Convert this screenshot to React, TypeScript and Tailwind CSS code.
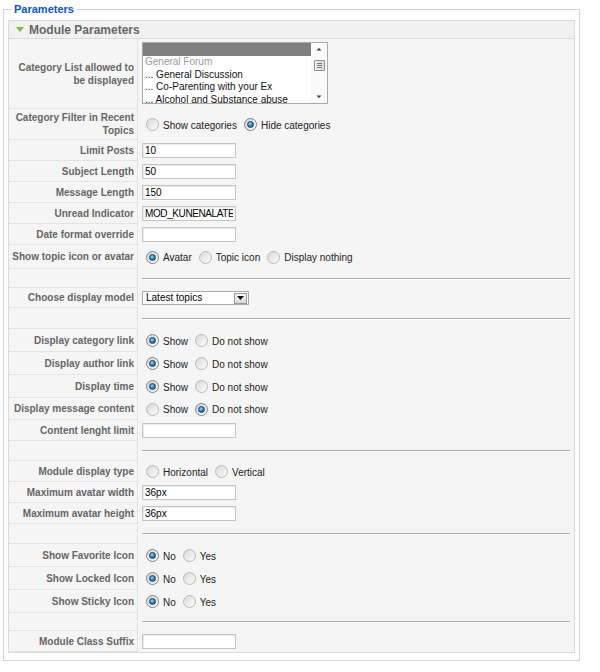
import React from "react";

const font = "font-['Liberation_Sans',Arial,Helvetica,sans-serif]";

function Radio({ checked }: { checked?: boolean }) {
  return (
    <span
      className={
        "inline-flex h-[13px] w-[13px] shrink-0 items-center justify-center rounded-full border " +
        (checked
          ? "border-[#808080] bg-[linear-gradient(135deg,#d4d4d4,#ffffff)]"
          : "border-[#b8b8b8] bg-[linear-gradient(135deg,#d9d9d9,#fdfdfd)]")
      }
    >
      {checked && (
        <span className="h-[7px] w-[7px] rounded-full border border-[#1f3c58] bg-[radial-gradient(circle_at_40%_35%,#a8dcf5_0%,#2f8cc2_45%,#104a74_100%)]" />
      )}
    </span>
  );
}

function RadioGroup({ options, value }: { options: string[]; value: number }) {
  return (
    <div className="flex items-center pl-[4px]">
      {options.map((o, i) => (
        <label key={o} className="mr-[7px] flex items-center">
          <Radio checked={i === value} />
          <span className="mt-[2px] ml-[4px] text-[10px] leading-[12px] text-[#222]">{o}</span>
        </label>
      ))}
    </div>
  );
}

function TextBox({ value = "", tight }: { value?: string; tight?: boolean }) {
  return (
    <input
      readOnly
      value={value}
      className={
        "h-[15px] w-[94px] border border-[#c4c4c4] bg-white px-[2px] text-[10px] leading-[12px] text-black shadow-[inset_1px_1px_0_#ececec] outline-none " +
        (tight ? "tracking-[-0.4px]" : "")
      }
    />
  );
}

function Rule() {
  return <div className="mr-[4px] h-0 w-full border-t border-b border-t-[#a9a9a9] border-b-[#ffffff]" />;
}

function Row({
  label,
  h,
  wrap,
  top,
  children,
}: {
  label?: string;
  h: string;
  wrap?: boolean;
  top?: boolean;
  children?: React.ReactNode;
}) {
  return (
    <div className={"flex " + h}>
      <div
        className={
          "flex w-[129px] shrink-0 items-center justify-end border-r border-b border-[#e4e4e4] pr-[3px] pl-[2px] text-right text-[10px] font-bold leading-[13px] text-[#666] " +
          (wrap ? "" : "whitespace-nowrap")
        }
      >
        {label}
      </div>
      <div className={"flex min-w-0 flex-1 pl-[4px] " + (top ? "items-start pt-[3px]" : "items-center")}>
        {children}
      </div>
    </div>
  );
}

function CategoryList() {
  return (
    <div className="flex h-[62px] w-[186px] border border-[#a9a9a9] bg-white">
      <div className="min-w-0 flex-1 overflow-hidden text-[10px] leading-[12.5px]">
        <div className="h-[13px] bg-[#808080]" />
        <div className="pl-[2px] text-[#9a9a9a]">General Forum</div>
        <div className="pl-[2px] text-[#111]">... General Discussion</div>
        <div className="pl-[2px] text-[#111]">... Co-Parenting with your Ex</div>
        <div className="pl-[2px] text-[#111]">... Alcohol and Substance abuse</div>
      </div>
      <div className="flex w-[16px] flex-col items-center bg-[#fafafa]">
        <svg width="16" height="13" viewBox="0 0 16 13">
          <path d="M5.5 7.5 L8 5 L10.5 7.5 Z" fill="#333" />
        </svg>
        <div className="mt-[4px] flex h-[11px] w-[11px] flex-col items-center justify-center gap-[1px] rounded-[1px] border border-[#8f8f8f] bg-[linear-gradient(90deg,#f2f2f2,#dcdcdc)]">
          <span className="h-px w-[5px] bg-[#777]" />
          <span className="h-px w-[5px] bg-[#777]" />
          <span className="h-px w-[5px] bg-[#777]" />
        </div>
        <div className="flex-1" />
        <svg width="16" height="13" viewBox="0 0 16 13">
          <path d="M5.5 5.5 L8 8 L10.5 5.5 Z" fill="#333" />
        </svg>
      </div>
    </div>
  );
}

function DisplayModel() {
  return (
    <div className="flex h-[14px] w-[107px] items-center border border-[#a9a9a9] bg-white">
      <span className="flex-1 pl-[3px] text-[10px] leading-[12px] text-black">Latest topics</span>
      <span className="mr-[1px] flex h-[11px] w-[13px] items-center justify-center border border-[#9a9a9a] bg-[linear-gradient(180deg,#f7f7f7,#d8d8d8)]">
        <svg width="7" height="4" viewBox="0 0 7 4">
          <path d="M0 0 H7 L3.5 4 Z" fill="#111" />
        </svg>
      </span>
    </div>
  );
}

export default function App() {
  const showHide = ["Show", "Do not show"];
  const noYes = ["No", "Yes"];
  return (
    <div className={"h-[672px] w-[600px] overflow-hidden bg-white " + font}>
      <fieldset className="mt-[3px] ml-[3px] w-[577px] border border-[#d4d4d4] px-[4px] pt-[4px] pb-[7px]">
        <legend className="ml-[3px] px-[3px] text-[11px] leading-[13px] font-bold text-[#0b55c4]">
          Parameters
        </legend>
        <div className="border border-[#dadada] bg-[#f5f5f5]">
          <div className="flex h-[18px] items-center border-b border-[#dadada] bg-[#f1f1f1] pl-[7px]">
            <svg width="8" height="5" viewBox="0 0 8 5" className="mr-[5px]">
              <path d="M0 0 H8 L4 5 Z" fill="#79c043" />
            </svg>
            <span className="mt-px text-[12px] leading-[14px] font-bold text-[#666]">Module Parameters</span>
          </div>

          <Row label="Category List allowed to be displayed" h="h-[70px]" wrap top>
            <CategoryList />
          </Row>
          <Row label="Category Filter in Recent Topics" h="h-[31px]" wrap>
            <RadioGroup options={["Show categories", "Hide categories"]} value={1} />
          </Row>
          <Row label="Limit Posts" h="h-[21px]">
            <TextBox value="10" />
          </Row>
          <Row label="Subject Length" h="h-[21px]">
            <TextBox value="50" />
          </Row>
          <Row label="Message Length" h="h-[21px]">
            <TextBox value="150" />
          </Row>
          <Row label="Unread Indicator" h="h-[21px]">
            <TextBox value="MOD_KUNENALATESTNEW" tight />
          </Row>
          <Row label="Date format override" h="h-[21px]">
            <TextBox />
          </Row>
          <Row label="Show topic icon or avatar" h="h-[24px]">
            <RadioGroup options={["Avatar", "Topic icon", "Display nothing"]} value={0} />
          </Row>
          <Row h="h-[19px]">
            <Rule />
          </Row>
          <Row label="Choose display model" h="h-[20px]">
            <DisplayModel />
          </Row>
          <Row h="h-[21px]">
            <Rule />
          </Row>
          <Row label="Display category link" h="h-[23px]">
            <RadioGroup options={showHide} value={0} />
          </Row>
          <Row label="Display author link" h="h-[23px]">
            <RadioGroup options={showHide} value={0} />
          </Row>
          <Row label="Display time" h="h-[23px]">
            <RadioGroup options={showHide} value={0} />
          </Row>
          <Row label="Display message content" h="h-[22px]">
            <RadioGroup options={showHide} value={1} />
          </Row>
          <Row label="Content lenght limit" h="h-[21px]">
            <TextBox />
          </Row>
          <Row h="h-[20px]">
            <Rule />
          </Row>
          <Row label="Module display type" h="h-[21px]">
            <RadioGroup options={["Horizontal", "Vertical"]} value={-1} />
          </Row>
          <Row label="Maximum avatar width" h="h-[21px]">
            <TextBox value="36px" />
          </Row>
          <Row label="Maximum avatar height" h="h-[21px]">
            <TextBox value="36px" />
          </Row>
          <Row h="h-[20px]">
            <Rule />
          </Row>
          <Row label="Show Favorite Icon" h="h-[23px]">
            <RadioGroup options={noYes} value={0} />
          </Row>
          <Row label="Show Locked Icon" h="h-[23px]">
            <RadioGroup options={noYes} value={0} />
          </Row>
          <Row label="Show Sticky Icon" h="h-[23px]">
            <RadioGroup options={noYes} value={0} />
          </Row>
          <Row h="h-[18px]">
            <Rule />
          </Row>
          <Row label="Module Class Suffix" h="h-[21px]">
            <TextBox />
          </Row>
        </div>
      </fieldset>
    </div>
  );
}
